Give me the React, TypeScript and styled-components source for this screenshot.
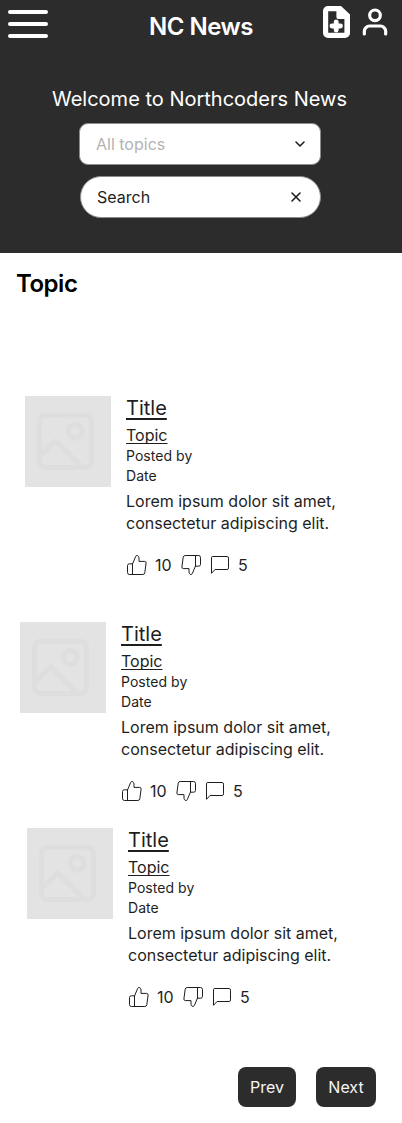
import React from "react";
import styled, { createGlobalStyle } from "styled-components";

const GlobalStyle = createGlobalStyle`
  * { box-sizing: border-box; }
  body { margin: 0; background: #fff; color: #1e1e1e; font-family: Inter, "Liberation Sans", sans-serif; }
  p, h1, h2, h3 { margin: 0; font-weight: 400; }
  button { border: 0; padding: 0; background: none; font: inherit; color: inherit; }
  svg { display: block; flex: none; }
`;

const Page = styled.div`
  width: 402px;
  height: 1123px;
  overflow: hidden;
  display: flex;
  flex-direction: column;
`;

const Header = styled.header`
  height: 253px;
  background: #2c2c2c;
  color: #fff;
  display: flex;
  flex-direction: column;
  align-items: center;
`;

const TopBar = styled.div`
  width: 100%;
  height: 84px;
  padding: 0 11px 0 8px;
  display: grid;
  grid-template-columns: 1fr auto 1fr;
  align-items: start;
`;

const MenuButton = styled.button`
  width: 40px;
  margin-top: 10px;
  display: flex;
  flex-direction: column;
  gap: 8px;
`;

const MenuLine = styled.span`
  height: 4px;
  width: 40px;
  border-radius: 2px;
  background: #fff;
`;

const Brand = styled.h1`
  margin: 12px 0 0 3px;
  font-size: 24px;
  line-height: 29px;
  font-weight: 600;
  letter-spacing: -0.48px;
`;

const Actions = styled.div`
  display: flex;
  justify-content: flex-end;
  gap: 9.5px;
  padding-top: 6px;
`;

const Welcome = styled.p`
  font-size: 20px;
  line-height: 30px;
  margin-bottom: 9px;
  margin-left: -3px;
  white-space: nowrap;
`;

const Field = styled.div<{ $pill?: boolean }>`
  width: ${(p) => (p.$pill ? 241 : 242)}px;
  height: 42px;
  margin: 0 0 ${(p) => (p.$pill ? 0 : 11)}px ${(p) => (p.$pill ? -1 : -2)}px;
  padding: 0 ${(p) => (p.$pill ? 16 : 12)}px 0 16px;
  border: 1px solid #8c8c8c;
  border-radius: ${(p) => (p.$pill ? 21 : 9)}px;
  background: #fff;
  color: ${(p) => (p.$pill ? "#1e1e1e" : "#b3b3b3")};
  font-size: 16px;
  display: flex;
  align-items: center;
  justify-content: space-between;
`;

const SectionTitle = styled.h2`
  height: 143px;
  padding: 16px 0 0 16px;
  font-size: 24px;
  line-height: 29px;
  font-weight: 600;
  letter-spacing: -0.48px;
  color: #000;
`;

const Article = styled.article<{ $indent: number; $height: number }>`
  display: flex;
  gap: 15px;
  height: ${(p) => p.$height}px;
  padding-left: ${(p) => p.$indent}px;
`;

const Thumbnail = styled.div`
  width: 86px;
  height: 91px;
  background: #e3e3e3;
  flex: none;
`;

const Details = styled.div`
  display: flex;
  flex-direction: column;
  align-items: flex-start;
`;

const Title = styled.h3`
  font-size: 20px;
  line-height: 24px;
  height: 28px;
  text-decoration: underline;
  text-decoration-skip-ink: none;
  text-underline-offset: 3px;
`;

const TopicLink = styled.p`
  font-size: 16px;
  line-height: 22px;
  height: 22px;
  text-decoration: underline;
  text-decoration-skip-ink: none;
  text-underline-offset: 2px;
`;

const Meta = styled.p`
  font-size: 14px;
  line-height: 20px;
  letter-spacing: 0.05px;
`;

const Summary = styled.p`
  width: 230px;
  margin-top: 4px;
  font-size: 16px;
  line-height: 22px;
`;

const Reactions = styled.div`
  display: flex;
  align-items: center;
  height: 24px;
  margin: 19px 0 0 -1px;
  font-size: 16px;
`;

const Count = styled.span`
  width: 30px;
  padding-left: 6px;
`;

const CommentIcon = styled.span`
  margin-left: 5px;
`;

const Pagination = styled.nav`
  display: flex;
  justify-content: flex-end;
  gap: 20px;
  padding-right: 26px;
`;

const PageButton = styled.button<{ $width: number }>`
  width: ${(p) => p.$width}px;
  height: 40px;
  border-radius: 8px;
  background: #2c2c2c;
  color: #f5f5f5;
  font-size: 16px;
`;

const Outline = ({ d, flipped }: { d: string; flipped?: boolean }) => (
  <svg width="24" height="24" viewBox="0 0 24 24" fill="none" stroke="#1e1e1e" strokeWidth="1" strokeLinecap="round" strokeLinejoin="round">
    <path d={d} transform={flipped ? "rotate(180 12 12)" : undefined} />
  </svg>
);

const thumb = "M7.5 11 10.7 3.4Q11 2.5 12 2.5C13.4 2.7 14 3.8 14 5V8.4H19.7Q21.2 8.5 21.1 10L19.8 19.8Q19.5 21.5 17.8 21.5H4.5Q2.5 21.5 2.5 19.5V12.5Q2.5 10.8 4.5 10.8H7.5V21.5";
const comment = "M20.5 15.2a1.3 1.3 0 0 1-1.3 1.3H7L3.5 20.3V4.8a1.3 1.3 0 0 1 1.3-1.3h14.4a1.3 1.3 0 0 1 1.3 1.3z";

const NewArticleIcon = () => (
  <svg width="27" height="32" viewBox="0 0 27 32">
    <path fill="#fff" fillRule="evenodd" d="M5 0H18L27 8.5V27a5 5 0 0 1-5 5H5a5 5 0 0 1-5-5V5a5 5 0 0 1 5-5ZM5.2 5.2V26.8H21.4V13H16a2.6 2.6 0 0 1-2.6-2.6V5.2Z" />
    <path stroke="#fff" strokeWidth="4.8" strokeLinecap="round" d="M13.2 15.8v8.4M8.9 20h8.6" />
  </svg>
);

const UserIcon = () => (
  <svg width="32" height="32" viewBox="0 0 32 32" fill="none" stroke="#fff" strokeWidth="3.2" strokeLinecap="round" strokeLinejoin="round">
    <path d="M26.67 28v-2.67A5.33 5.33 0 0 0 21.33 20H10.67a5.33 5.33 0 0 0-5.34 5.33V28" />
    <circle cx="16" cy="9.33" r="5.33" />
  </svg>
);

const PictureIcon = () => (
  <svg width="86" height="91" viewBox="0 0 86 91" fill="none" stroke="#dedede" strokeWidth="5" strokeLinecap="round" strokeLinejoin="round">
    <path d="M20.5 19.3H60.5a6 6 0 0 1 6 6V65.5a6 6 0 0 1-6 6H20.5a6 6 0 0 1-6-6V25.3a6 6 0 0 1 6-6ZM15 60 30.7 45 57 71M57.2 35.4a7 7 0 1 1-14 0a7 7 0 1 1 14 0Z" />
  </svg>
);

const articles = [
  { indent: 25, height: 226 },
  { indent: 20, height: 206 },
  { indent: 27, height: 239 },
];

export default function App() {
  return (
    <Page>
      <GlobalStyle />
      <Header>
        <TopBar>
          <MenuButton aria-label="Menu">
            <MenuLine />
            <MenuLine />
            <MenuLine />
          </MenuButton>
          <Brand>NC News</Brand>
          <Actions>
            <NewArticleIcon />
            <UserIcon />
          </Actions>
        </TopBar>
        <Welcome>Welcome to Northcoders News</Welcome>
        <Field>
          All topics
          <svg width="16" height="16" viewBox="0 0 16 16" fill="none" stroke="#1e1e1e" strokeWidth="1.6" strokeLinecap="round" strokeLinejoin="round">
            <path d="m4 6 4 4 4-4" />
          </svg>
        </Field>
        <Field $pill>
          Search
          <svg width="16" height="16" viewBox="0 0 16 16" fill="none" stroke="#1e1e1e" strokeWidth="1.6" strokeLinecap="round">
            <path d="m4 4 8 8M12 4l-8 8" />
          </svg>
        </Field>
      </Header>
      <SectionTitle>Topic</SectionTitle>
      {articles.map((a) => (
        <Article key={a.indent} $indent={a.indent} $height={a.height}>
          <Thumbnail>
            <PictureIcon />
          </Thumbnail>
          <Details>
            <Title>Title</Title>
            <TopicLink>Topic</TopicLink>
            <Meta>Posted by</Meta>
            <Meta>Date</Meta>
            <Summary>Lorem ipsum dolor sit amet, consectetur adipiscing elit.</Summary>
            <Reactions>
              <Outline d={thumb} />
              <Count>10</Count>
              <Outline d={thumb} flipped />
              <CommentIcon>
                <Outline d={comment} />
              </CommentIcon>
              <Count>5</Count>
            </Reactions>
          </Details>
        </Article>
      ))}
      <Pagination>
        <PageButton $width={58}>Prev</PageButton>
        <PageButton $width={60}>Next</PageButton>
      </Pagination>
    </Page>
  );
}
